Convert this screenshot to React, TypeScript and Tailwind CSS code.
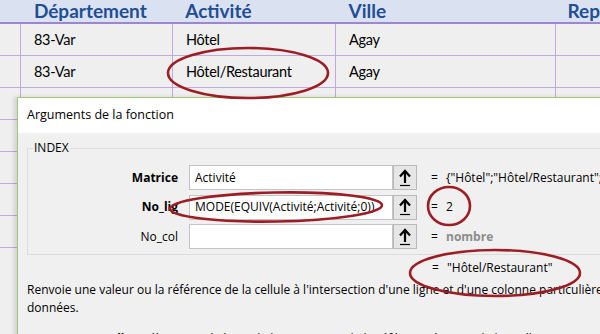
import React from 'react';

const ROWS = [
  { dep: '83-Var', act: 'Hôtel', ville: 'Agay' },
  { dep: '83-Var', act: 'Hôtel/Restaurant', ville: 'Agay' },
  { dep: '83-Var', act: 'Hôtel', ville: 'Agay' },
  { dep: '83-Var', act: 'Hôtel', ville: 'Agay' },
  { dep: '83-Var', act: 'Hôtel', ville: 'Agay' },
  { dep: '83-Var', act: 'Hôtel', ville: 'Agay' },
  { dep: '83-Var', act: 'Hôtel', ville: 'Agay' },
];

const RefButton = () => (
  <div className="w-[24px] h-[25px] border border-[#b9b9b9] bg-[#e6e6e6] flex items-center justify-center">
    <svg width="14" height="18" viewBox="0 0 14 18">
      <path d="M7 14V3" stroke="#000" strokeWidth="2.2" fill="none" />
      <path d="M2 7.5L7 2l5 5.5" stroke="#000" strokeWidth="2.2" fill="none" />
      <path d="M2 16.5h10" stroke="#000" strokeWidth="1.2" />
    </svg>
  </div>
);

type ArgRowProps = {
  label: string;
  bold?: boolean;
  value: string;
  result: string;
  muted?: boolean;
};

const ArgRow = ({ label, bold, value, result, muted }: ArgRowProps) => (
  <div className="flex items-center h-[25px]">
    <div
      className={`w-[161px] text-right pr-[11px] text-[12px] text-black ${bold ? 'font-bold' : ''}`}
    >
      {label}
    </div>
    <div className="w-[204px] h-[25px] bg-white border border-[#c4c4c4] px-[5px] flex items-center text-[12px] text-black whitespace-nowrap overflow-hidden">
      {value}
    </div>
    <RefButton />
    <div className="w-[15px] ml-[14px] text-[12px]">=</div>
    <div
      className={`whitespace-nowrap text-[12px] ${muted ? 'text-[#8c8c8c] font-bold' : 'text-black'}`}
    >
      {result}
    </div>
  </div>
);

export default function App() {
  return (
    <div className="relative w-[600px] h-[334px] overflow-hidden bg-[#efefef] font-['Open_Sans',sans-serif]">
      {/* sheet */}
      <div className="font-['Lato',sans-serif]">
        <div className="flex h-[24px] bg-[#dae2f2] border-b-2 border-[#9d86cf] text-[#1f4e95] text-[19px] font-bold leading-[22px]">
          <div className="w-[21px]" />
          <div className="w-[152px] pl-[13px]">Département</div>
          <div className="w-[163px] pl-[13px]">Activité</div>
          <div className="w-[220px] pl-[14px]">Ville</div>
          <div className="flex-1 pl-[14px] whitespace-nowrap">Rep</div>
        </div>
        {ROWS.map((r, i) => (
          <div
            key={i}
            className="flex h-[32px] border-b border-[#c1a9df] text-[14.5px] tracking-[-0.3px] text-black items-center"
          >
            <div className="w-[21px] h-full border-r border-[#c1a9df]" />
            <div className="w-[152px] h-full pl-[13px] border-r border-[#c1a9df] flex items-center">
              {r.dep}
            </div>
            <div className="w-[163px] h-full pl-[13px] border-r border-[#c1a9df] flex items-center">
              {r.act}
            </div>
            <div className="w-[220px] h-full pl-[13px] border-r border-[#c1a9df] flex items-center">
              {r.ville}
            </div>
            <div className="flex-1 h-full" />
          </div>
        ))}
      </div>

      {/* dialog window */}
      <div className="absolute left-[17px] top-[97px] w-[640px] h-[300px] border-t border-l border-[#9fcb73] bg-[#f0f0f0] shadow-[-3px_0_4px_rgba(0,0,0,0.12)]">
        <div className="h-[35px] bg-white flex items-center pl-[9px] text-[12.5px] text-black">
          Arguments de la fonction
        </div>
        <div className="pl-[9px] pt-[15px]">
          <div className="relative border border-[#dcdcdc] h-[107px] pt-[16px]">
            <div className="absolute left-[5px] top-[-10px] bg-[#f0f0f0] px-[1px] text-[12px] text-black">
              INDEX
            </div>
            <div className="flex flex-col gap-[4.5px]">
              <ArgRow
                label="Matrice"
                bold
                value="Activité"
                result={'{"Hôtel";"Hôtel/Restaurant";"'}
              />
              <ArgRow
                label="No_lig"
                bold
                value="MODE(EQUIV(Activité;Activité;0))"
                result="2"
              />
              <ArgRow label="No_col" value="" result="nombre" muted />
            </div>
          </div>
          <div className="flex h-[26px] items-center pl-[405px] text-[12px] text-black whitespace-nowrap">
            <span className="w-[15px]">=</span>
            <span>"Hôtel/Restaurant"</span>
          </div>
          <p className="text-[12px] leading-[18px] text-black whitespace-nowrap">
            Renvoie une valeur ou la référence de la cellule à l'intersection d'une ligne et d'une colonne particulières, dans une plage de
            <br />
            données.
          </p>
          <div className="flex mt-[13px] text-[12px] text-black whitespace-nowrap">
            <span className="w-[208px] text-right font-bold">No_lig</span>
            <span className="ml-[12px]">
              sélectionne la ligne de la matrice ou de la référence à partir de laquelle renvoyer une valeur.
            </span>
          </div>
        </div>
      </div>

      {/* annotations */}
      <svg
        className="absolute inset-0 pointer-events-none"
        width="600"
        height="334"
        viewBox="0 0 600 334"
      >
        <g fill="none" stroke="#9c1d24" strokeWidth="2.6">
          <ellipse cx="248" cy="73" rx="80" ry="25" />
          <ellipse cx="276" cy="207" rx="106" ry="14.5" transform="rotate(-1 276 207)" />
          <ellipse cx="449" cy="206" rx="21" ry="19" />
          <ellipse cx="495" cy="273" rx="85" ry="23" />
        </g>
      </svg>
    </div>
  );
}
